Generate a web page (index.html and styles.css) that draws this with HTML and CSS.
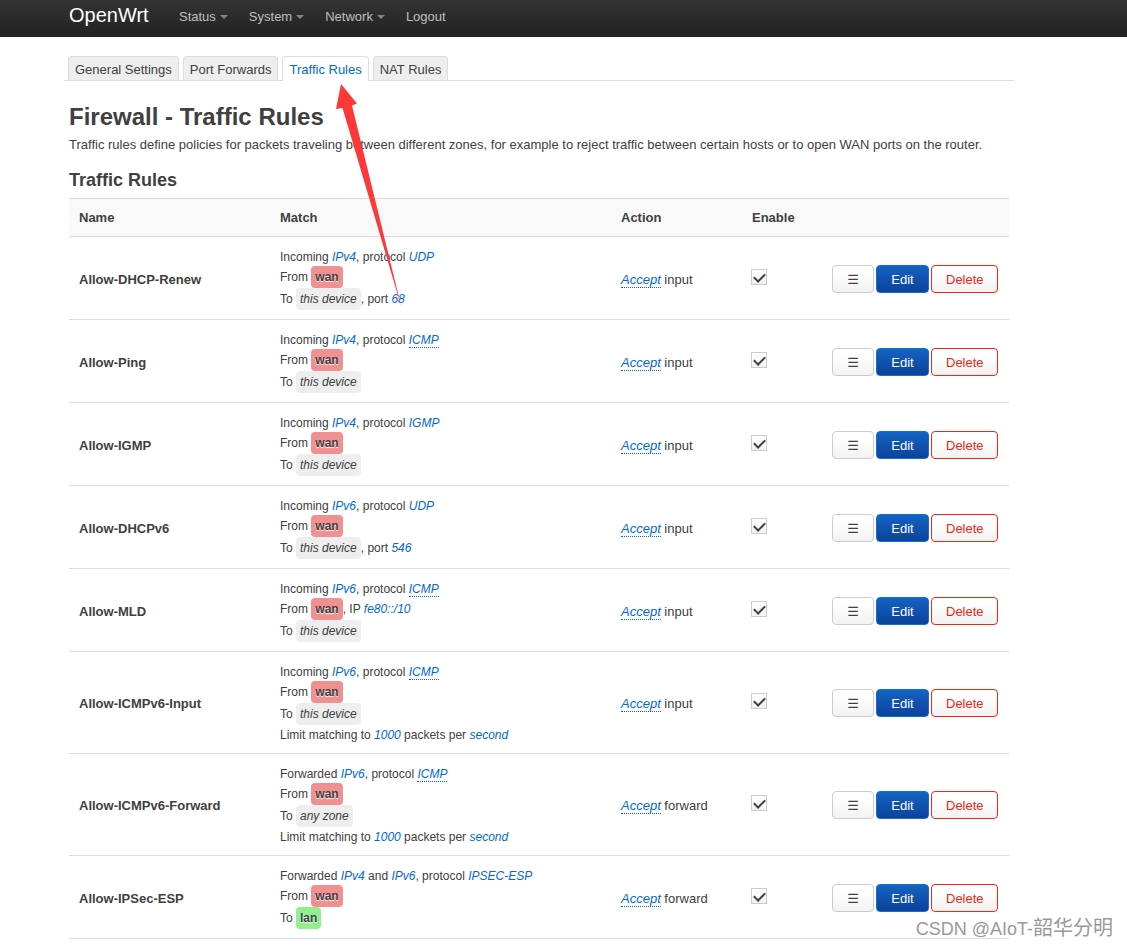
FILE: index.html
```html
<!DOCTYPE html>
<html lang="en">
<head>
<meta charset="utf-8">
<title>OpenWrt - Firewall - Traffic Rules</title>
<link rel="stylesheet" href="styles.css">
</head>
<body>
<header class="topbar">
  <a class="brand" href="#">OpenWrt</a>
  <nav class="menu">
    <a class="dropdown" href="#">Status</a>
    <a class="dropdown" href="#">System</a>
    <a class="dropdown" href="#">Network</a>
    <a href="#">Logout</a>
  </nav>
</header>
<main class="container">
  <nav class="tabs">
    <a class="tab" href="#">General Settings</a>
    <a class="tab" href="#">Port Forwards</a>
    <a class="tab active" href="#">Traffic Rules</a>
    <a class="tab" href="#">NAT Rules</a>
  </nav>
  <h2>Firewall - Traffic Rules</h2>
  <p class="descr">Traffic rules define policies for packets traveling between different zones, for example to reject traffic between certain hosts or to open WAN ports on the router.</p>
  <h3>Traffic Rules</h3>
  <table class="rules">
    <thead>
      <tr><th class="c-name">Name</th><th class="c-match">Match</th><th class="c-action">Action</th><th class="c-enable">Enable</th><th class="c-buttons"></th></tr>
    </thead>
    <tbody>
      <tr>
        <td class="name">Allow-DHCP-Renew</td>
        <td class="match"><div class="line">Incoming <var>IPv4</var>, protocol <var>UDP</var></div><div class="zone-line">From <span class="zone wan">wan</span></div><div class="zone-line">To <span class="zone any">this device</span>, port <var>68</var></div></td>
        <td class="action"><var class="tip">Accept</var> input</td>
        <td><input type="checkbox" aria-label="Enable Allow-DHCP-Renew" checked></td>
        <td><div class="buttons"><button class="btn drag" aria-label="Drag to reorder">☰</button><button class="btn edit">Edit</button><button class="btn delete">Delete</button></div></td>
      </tr>
      <tr>
        <td class="name">Allow-Ping</td>
        <td class="match"><div class="line">Incoming <var>IPv4</var>, protocol <var class="tip">ICMP</var></div><div class="zone-line">From <span class="zone wan">wan</span></div><div class="zone-line">To <span class="zone any">this device</span></div></td>
        <td class="action"><var class="tip">Accept</var> input</td>
        <td><input type="checkbox" aria-label="Enable Allow-Ping" checked></td>
        <td><div class="buttons"><button class="btn drag" aria-label="Drag to reorder">☰</button><button class="btn edit">Edit</button><button class="btn delete">Delete</button></div></td>
      </tr>
      <tr>
        <td class="name">Allow-IGMP</td>
        <td class="match"><div class="line">Incoming <var>IPv4</var>, protocol <var>IGMP</var></div><div class="zone-line">From <span class="zone wan">wan</span></div><div class="zone-line">To <span class="zone any">this device</span></div></td>
        <td class="action"><var class="tip">Accept</var> input</td>
        <td><input type="checkbox" aria-label="Enable Allow-IGMP" checked></td>
        <td><div class="buttons"><button class="btn drag" aria-label="Drag to reorder">☰</button><button class="btn edit">Edit</button><button class="btn delete">Delete</button></div></td>
      </tr>
      <tr>
        <td class="name">Allow-DHCPv6</td>
        <td class="match"><div class="line">Incoming <var>IPv6</var>, protocol <var>UDP</var></div><div class="zone-line">From <span class="zone wan">wan</span></div><div class="zone-line">To <span class="zone any">this device</span>, port <var>546</var></div></td>
        <td class="action"><var class="tip">Accept</var> input</td>
        <td><input type="checkbox" aria-label="Enable Allow-DHCPv6" checked></td>
        <td><div class="buttons"><button class="btn drag" aria-label="Drag to reorder">☰</button><button class="btn edit">Edit</button><button class="btn delete">Delete</button></div></td>
      </tr>
      <tr>
        <td class="name">Allow-MLD</td>
        <td class="match"><div class="line">Incoming <var>IPv6</var>, protocol <var class="tip">ICMP</var></div><div class="zone-line">From <span class="zone wan">wan</span>, IP <var>fe80::/10</var></div><div class="zone-line">To <span class="zone any">this device</span></div></td>
        <td class="action"><var class="tip">Accept</var> input</td>
        <td><input type="checkbox" aria-label="Enable Allow-MLD" checked></td>
        <td><div class="buttons"><button class="btn drag" aria-label="Drag to reorder">☰</button><button class="btn edit">Edit</button><button class="btn delete">Delete</button></div></td>
      </tr>
      <tr>
        <td class="name">Allow-ICMPv6-Input</td>
        <td class="match"><div class="line">Incoming <var>IPv6</var>, protocol <var class="tip">ICMP</var></div><div class="zone-line">From <span class="zone wan">wan</span></div><div class="zone-line">To <span class="zone any">this device</span></div><div class="line">Limit matching to <var>1000</var> packets per <var>second</var></div></td>
        <td class="action"><var class="tip">Accept</var> input</td>
        <td><input type="checkbox" aria-label="Enable Allow-ICMPv6-Input" checked></td>
        <td><div class="buttons"><button class="btn drag" aria-label="Drag to reorder">☰</button><button class="btn edit">Edit</button><button class="btn delete">Delete</button></div></td>
      </tr>
      <tr>
        <td class="name">Allow-ICMPv6-Forward</td>
        <td class="match"><div class="line">Forwarded <var>IPv6</var>, protocol <var class="tip">ICMP</var></div><div class="zone-line">From <span class="zone wan">wan</span></div><div class="zone-line">To <span class="zone any">any zone</span></div><div class="line">Limit matching to <var>1000</var> packets per <var>second</var></div></td>
        <td class="action"><var class="tip">Accept</var> forward</td>
        <td><input type="checkbox" aria-label="Enable Allow-ICMPv6-Forward" checked></td>
        <td><div class="buttons"><button class="btn drag" aria-label="Drag to reorder">☰</button><button class="btn edit">Edit</button><button class="btn delete">Delete</button></div></td>
      </tr>
      <tr>
        <td class="name">Allow-IPSec-ESP</td>
        <td class="match"><div class="line">Forwarded <var>IPv4</var> and <var>IPv6</var>, protocol <var>IPSEC-ESP</var></div><div class="zone-line">From <span class="zone wan">wan</span></div><div class="zone-line">To <span class="zone lan">lan</span></div></td>
        <td class="action"><var class="tip">Accept</var> forward</td>
        <td><input type="checkbox" aria-label="Enable Allow-IPSec-ESP" checked></td>
        <td><div class="buttons"><button class="btn drag" aria-label="Drag to reorder">☰</button><button class="btn edit">Edit</button><button class="btn delete">Delete</button></div></td>
      </tr>
    </tbody>
  </table>
</main>
<svg class="arrow" width="72" height="224" viewBox="0 0 72 224" aria-hidden="true"><path d="M11 0 27 19.5 22 21.5 71.5 223.5 12.500 24 6 25Z" fill="#fd3838"/></svg>
<div class="watermark">CSDN @AIoT-<span class="han">韶华分明</span></div>
</body>
</html>
```
FILE: styles.css
```css
* { box-sizing: border-box; }
body {
  position: relative;
  min-height: 100vh;
  margin: 0;
  background: #fff;
  color: #404040;
  font: 13px/18px "Liberation Sans", Arial, "Noto Sans CJK SC", sans-serif;
}
a { color: inherit; text-decoration: none; }

.topbar {
  display: flex;
  height: 37px;
  padding: 0 69px;
  background: linear-gradient(#333, #222);
  color: #bfbfbf;
}
.brand { width: 110px; color: #fff; font-size: 20px; line-height: 30px; }
.menu { display: flex; gap: 21px; line-height: 33px; }
.dropdown::after {
  content: "";
  display: inline-block;
  margin-left: 4px;
  vertical-align: 2px;
  border: 4px solid transparent;
  border-top-color: #848484;
  border-bottom: 0;
}

.container { padding: 19px 118px 0 69px; }
.tabs {
  display: flex;
  gap: 4px;
  margin: 0 -5px;
  padding-left: 4px;
  border-bottom: 1px solid #ddd;
}
.tab {
  height: 24px;
  padding: 0 6px;
  border: 1px solid #ddd;
  border-bottom: 0;
  border-radius: 4px 4px 0 0;
  background: #eee;
  line-height: 25px;
}
.tab.active { height: 25px; margin-bottom: -1px; background: #fff; color: #0069d6; }

h2 { margin: 18px 0 0; font-size: 24px; line-height: 36px; }
.descr { margin: 1px 0 0; }
h3 { margin: 8px 0 0; font-size: 18px; line-height: 36px; }

.rules { width: 100%; border-collapse: separate; border-spacing: 0; table-layout: fixed; border-top: 1px solid #ddd; }
.rules th, .rules td { padding: 10px 10px 9px; border-bottom: 1px solid #ddd; text-align: left; vertical-align: middle; }
.rules th { height: 38px; padding: 9px 10px; background: #f9f9f9; }
.c-name { width: 201px; }
.c-action { width: 131px; }
.c-enable { width: 80px; }
.c-buttons { width: 187px; }
.rules .name { padding-top: 12px; font-weight: bold; }
.rules .action { padding-top: 12px; }
.match { font-size: 12px; }
.line { padding-top: 1px; line-height: 18px; }
.zone-line { height: 22px; line-height: 22px; white-space: nowrap; }
.zone {
  display: inline-block;
  height: 22px;
  padding: 0 4px;
  border-radius: 4px;
  vertical-align: top;
}
.wan, .lan { font-weight: bold; text-shadow: 0 1px 1px #fff; }
.wan { background: #f09090; }
.lan { background: #90f090; }
.any { background: #eee; font-style: italic; }
var { color: #0069d6; font-style: italic; }
.tip { border-bottom: 1px dotted #0069d6; }

input[type="checkbox"] {
  appearance: none;
  display: block;
  width: 16px;
  height: 16px;
  margin: 0 0 4px -1px;
  border: 1px solid #ccc;
  background: linear-gradient(#fff, #f2f2f2);
}
input[type="checkbox"]:checked::before {
  content: "";
  display: block;
  width: 9px;
  height: 5px;
  margin: 3px 0 0 2px;
  border: solid #404040;
  border-width: 0 0 2px 2px;
  transform: rotate(-45deg);
}

.buttons { display: flex; gap: 2px; }
.btn {
  height: 28px;
  padding: 2px 14px 0;
  border: 1px solid #ccc;
  border-radius: 4px;
  background: linear-gradient(#fff 25%, #f2f2f2);
  color: #404040;
  font: 13px/18px "Liberation Sans", Arial, "DejaVu Sans", sans-serif;
}
.drag { width: 42px; }
.edit { width: 53px; border-color: #1070d0; background: linear-gradient(#1463c2, #0c429b); color: #fff; }
.delete { width: 67px; border-color: #f22613; color: #f22613; }

.arrow { position: absolute; left: 330px; top: 84px; }
.watermark {
  position: absolute;
  right: 14px;
  bottom: 4px;
  color: #999;
  font-size: 18px;
  line-height: 30px;
  text-shadow: 1px 1px 0 #fff;
}
.han { font-size: 20px; }
```
